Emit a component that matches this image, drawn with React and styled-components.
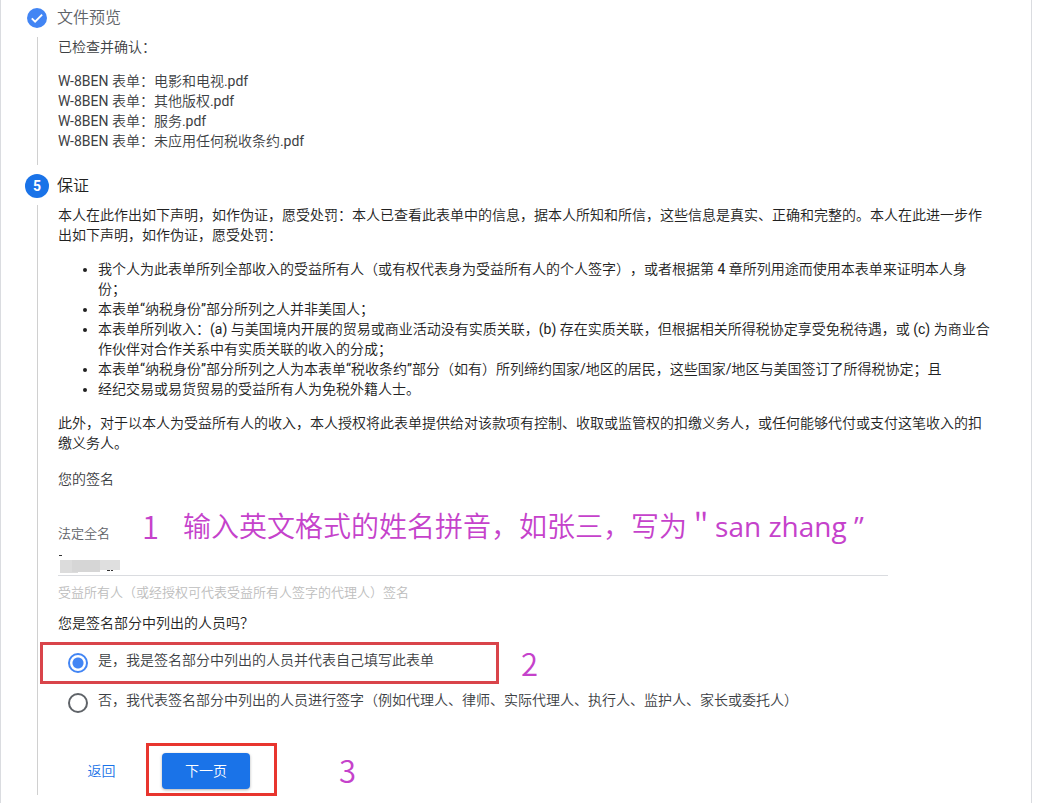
import React, { useState } from 'react';
import styled, { createGlobalStyle } from 'styled-components';

const files = [
  'W-8BEN 表单：电影和电视.pdf',
  'W-8BEN 表单：其他版权.pdf',
  'W-8BEN 表单：服务.pdf',
  'W-8BEN 表单：未应用任何税收条约.pdf',
]

const statements = [
  '我个人为此表单所列全部收入的受益所有人（或有权代表身为受益所有人的个人签字），或者根据第 4 章所列用途而使用本表单来证明本人身份；',
  '本表单“纳税身份”部分所列之人并非美国人；',
  '本表单所列收入：(a) 与美国境内开展的贸易或商业活动没有实质关联，(b) 存在实质关联，但根据相关所得税协定享受免税待遇，或 (c) 为商业合作伙伴对合作关系中有实质关联的收入的分成；',
  '本表单“纳税身份”部分所列之人为本表单“税收条约”部分（如有）所列缔约国家/地区的居民，这些国家/地区与美国签订了所得税协定；且',
  '经纪交易或易货贸易的受益所有人为免税外籍人士。',
]

const options = [
  { id: 'self', text: '是，我是签名部分中列出的人员并代表自己填写此表单' },
  { id: 'agent', text: '否，我代表签名部分中列出的人员进行签字（例如代理人、律师、实际代理人、执行人、监护人、家长或委托人）' },
]

const App = () => {
  const [signer, setSigner] = useState('self')
  const [name, setName] = useState('')

  return (
    <>
      <GlobalStyle />
      <Card lang="zh-CN">
        <Step>
          <DoneMark viewBox="0 0 20 20" aria-hidden="true">
            <circle cx="10" cy="10" r="10" fill="#4285f4" />
            <path d="M4.8 10.4l3.3 3.3 7-7" fill="none" stroke="#fff" strokeWidth="1.9" />
          </DoneMark>
          <StepTitle $done>文件预览</StepTitle>
          <Rail />
          <Body $muted>
            <Paragraph>已检查并确认：</Paragraph>
            <FileList>
              {files.map(file => <li key={file}>{file}</li>)}
            </FileList>
          </Body>
        </Step>

        <Step>
          <StepNumber>5</StepNumber>
          <StepTitle>保证</StepTitle>
          <Rail />
          <Body>
            <Paragraph>
              本人在此作出如下声明，如作伪证，愿受处罚：本人已查看此表单中的信息，据本人所知和所信，这些信息是真实、正确和完整的。本人在此进一步作出如下声明，如作伪证，愿受处罚：
            </Paragraph>
            <Statements>
              {statements.map(text => <li key={text}>{text}</li>)}
            </Statements>
            <Paragraph>
              此外，对于以本人为受益所有人的收入，本人授权将此表单提供给对该款项有控制、收取或监管权的扣缴义务人，或任何能够代付或支付这笔收入的扣缴义务人。
            </Paragraph>

            <SectionLabel>您的签名</SectionLabel>
            <Field>
              <FieldLabel htmlFor="legal-name">法定全名</FieldLabel>
              <NameInput
                id="legal-name"
                aria-describedby="legal-name-hint"
                autoComplete="off"
                value={name}
                onChange={e => setName(e.target.value)}
              />
              <Mosaic viewBox="0 0 64 18" aria-hidden="true">
                <path d="M2 5h18v13H2z" fill="#dcdcdc" />
                <path d="M14 5h28v12H14z" fill="#d6d6d6" />
                <path d="M42 5h20v10H42z" fill="#dfdfdf" />
                <path d="M1 0h3v1H1z M49 15h3v1h-3z M53 15h2v1h-2z" fill="#333" />
              </Mosaic>
              <Hint id="legal-name-hint">受益所有人（或经授权可代表受益所有人签字的代理人）签名</Hint>
              <StepNote>
                <Digit>1</Digit>
                <span>输入英文格式的姓名拼音，如张三，写为＂san zhang ”</span>
              </StepNote>
            </Field>

            <Question id="signer-question">您是签名部分中列出的人员吗？</Question>
            <Options role="radiogroup" aria-labelledby="signer-question">
              {options.map(option => (
                <Option key={option.id}>
                  <Radio
                    type="radio"
                    name="signer"
                    checked={signer === option.id}
                    onChange={() => setSigner(option.id)}
                  />
                  <span>{option.text}</span>
                </Option>
              ))}
              <OptionMark><Digit>2</Digit></OptionMark>
            </Options>

            <Actions>
              <BackButton type="button">返回</BackButton>
              <NextButton type="button">下一页</NextButton>
              <NextMark><Digit>3</Digit></NextMark>
            </Actions>
          </Body>
        </Step>
      </Card>
    </>
  )
}

const GlobalStyle = createGlobalStyle`
  * {
    box-sizing: border-box;
  }

  body {
    margin: 0;
    background: #fff;
    color: #212121;
    font: 400 14px/20px Roboto, "Noto Sans CJK SC DemiLight", "Noto Sans CJK SC Light", "Noto Sans CJK SC", sans-serif;
    text-spacing-trim: space-all;
  }

  button, input {
    font: inherit;
  }
`

const Card = styled.main`
  margin-right: 15px;
  padding: 6px 38px 8px 24px;
  border: solid #dadce0;
  border-width: 0 1px;
`

const Step = styled.section`
  display: grid;
  grid-template-columns: 24px 1fr;
  gap: 7px 8px;
  margin-bottom: 9px;

  &:last-child {
    margin-bottom: 0;
  }
`

const DoneMark = styled.svg`
  width: 20px;
  height: 20px;
  place-self: center;
`

const StepNumber = styled.div`
  width: 24px;
  height: 24px;
  border-radius: 50%;
  background: #1a73e8;
  color: #fff;
  font-weight: 700;
  line-height: 24px;
  text-align: center;
`

const StepTitle = styled.h2`
  margin: 0;
  color: ${props => props.$done ? '#5f6368' : '#212121'};
  font-size: 16px;
  font-weight: 400;
  line-height: 24px;
`

const Rail = styled.div`
  width: 1px;
  background: #d0d0d0;
  justify-self: center;
`

const Body = styled.div`
  min-width: 0;
  padding: 0 0 0 1px;
  color: ${props => props.$muted ? '#3c4043' : '#212121'};
`

const Paragraph = styled.p`
  margin: 0 0 14px;
`

const FileList = styled.ul`
  margin: 0 0 14px;
  padding: 0;
  list-style: none;
`

const Statements = styled.ul`
  margin: 0 0 14px;
  padding-left: 40px;
`

const SectionLabel = styled.h3`
  margin: 16px 0 35px;
  color: #3c4043;
  font-size: 14px;
  font-weight: 400;
`

const Field = styled.div`
  position: relative;
  max-width: 830px;
  font-size: 13px;
`

const FieldLabel = styled.label`
  display: block;
  color: #5f6368;
`

const NameInput = styled.input`
  display: block;
  width: 100%;
  height: 32px;
  padding: 0;
  border: 0;
  border-bottom: 1px solid #dadce0;
  outline: none;
  background: none;
`

const Mosaic = styled.svg`
  position: absolute;
  top: 31px;
  left: 0;
  width: 64px;
  height: 18px;
  pointer-events: none;
`

const Hint = styled.div`
  margin-top: 7px;
  color: #bdbdbd;
`

const Note = styled.div`
  position: absolute;
  display: flex;
  align-items: center;
  color: #c542cb;
  font-family: "Open Sans", "Noto Sans CJK SC DemiLight", "Noto Sans CJK SC Light", "Noto Sans CJK SC", sans-serif;
  font-size: 28px;
  line-height: 32px;
  white-space: nowrap;
  pointer-events: none;
`

const Digit = styled.span`
  font-family: "Noto Sans CJK SC DemiLight", "Noto Sans CJK SC Light", "Noto Sans CJK SC", sans-serif;
  font-size: 31px;
  line-height: 28px;
`

const StepNote = styled(Note)`
  top: -14px;
  left: 84px;
  gap: 24px;
`

const Question = styled.div`
  margin: 10px 0;
`

const Options = styled.div`
  position: relative;
`

const Option = styled.label`
  display: flex;
  align-items: flex-start;
  gap: 10px;
  height: 40px;
  padding: 7px 0 0 10px;
  color: #3c4043;
`

const Radio = styled.input`
  appearance: none;
  flex: none;
  width: 20px;
  height: 20px;
  margin: 3px 0 0;
  border: 2px solid #5f6368;
  border-radius: 50%;

  &:checked {
    border-color: #4285f4;
    background: radial-gradient(circle, #4285f4 5px, transparent 6px);
  }
`

const OptionMark = styled(Note)`
  top: -1px;
  left: -18px;
  width: 459px;
  height: 42px;
  border: 3px solid #d9444a;

  ${Digit} {
    margin-left: 478px;
  }
`

const Actions = styled.div`
  position: relative;
  display: flex;
  align-items: center;
  gap: 34px;
  margin-top: 30px;
  padding: 0 0 6px 17px;
`

const BackButton = styled.button`
  width: 53px;
  height: 36px;
  padding: 0;
  border: 0;
  background: none;
  color: #1a73e8;
  cursor: pointer;
`

const NextButton = styled.button`
  width: 88px;
  height: 36px;
  border: 0;
  border-radius: 4px;
  background: #1a73e8;
  box-shadow: 0 1px 3px rgba(60, 64, 67, 0.4);
  color: #fff;
  cursor: pointer;
`

const NextMark = styled(Note)`
  top: -10px;
  left: 88px;
  width: 131px;
  height: 53px;
  border: 3px solid #e8352e;

  ${Digit} {
    margin-left: 190px;
  }
`

export default App;
